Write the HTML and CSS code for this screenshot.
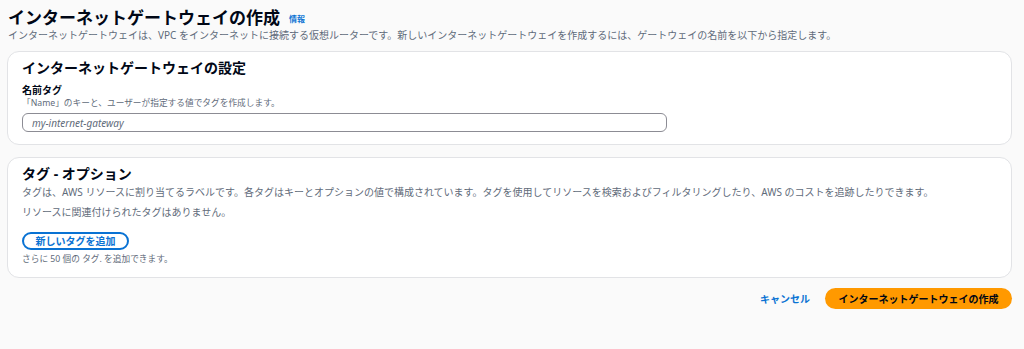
FILE: index.html
```html
<!DOCTYPE html>
<html lang="ja">
<head>
<meta charset="utf-8">
<title>インターネットゲートウェイの作成</title>
<link rel="stylesheet" href="styles.css">
</head>
<body>
<main class="page">
  <header class="page-header">
    <h1 class="title">インターネットゲートウェイの作成 <a class="info" href="#">情報</a></h1>
    <p class="subtitle">インターネットゲートウェイは、VPC をインターネットに接続する仮想ルーターです。新しいインターネットゲートウェイを作成するには、ゲートウェイの名前を以下から指定します。</p>
  </header>

  <section class="card">
    <h2 class="card-title">インターネットゲートウェイの設定</h2>
    <div class="field">
      <label class="label" for="name">名前タグ</label>
      <div class="hint">「Name」のキーと、ユーザーが指定する値でタグを作成します。</div>
      <input class="input" id="name" type="text" placeholder="my-internet-gateway">
    </div>
  </section>

  <section class="card card-tags">
    <h2 class="card-title">タグ - オプション</h2>
    <p class="desc">タグは、AWS リソースに割り当てるラベルです。各タグはキーとオプションの値で構成されています。タグを使用してリソースを検索およびフィルタリングしたり、AWS のコストを追跡したりできます。</p>
    <p class="empty">リソースに関連付けられたタグはありません。</p>
    <button class="btn-outline" type="button">新しいタグを追加</button>
    <p class="small">さらに 50 個の タグ. を追加できます。</p>
  </section>

  <footer class="actions">
    <button class="btn-link" type="button">キャンセル</button>
    <button class="btn-primary" type="button">インターネットゲートウェイの作成</button>
  </footer>
</main>
</body>
</html>
```

FILE: styles.css
```css
* { box-sizing: border-box; }
html, body { margin: 0; padding: 0; }
body {
  background: #fafafa;
  font-family: "Noto Sans", "Noto Sans CJK JP", sans-serif;
  color: #000716;
  width: 1024px;
  height: 349px;
  overflow: hidden;
}
.page {
  padding: 8px 12px 0 7px;
  display: flex;
  flex-direction: column;
}
.page-header { display: flex; flex-direction: column; }
.title {
  margin: 0;
  font-size: 17px;
  line-height: 20px;
  font-weight: 700;
  display: flex;
  align-items: center;
  gap: 9px;
  padding-left: 1px;
}
.info {
  font-size: 8px;
  font-weight: 700;
  color: #0972d3;
  text-decoration: none;
  line-height: 10px;
  margin-top: 1px;
}
.subtitle {
  margin: 0;
  font-size: 10px;
  line-height: 14px;
  color: #5f6b7a;
  padding-left: 1px;
}
.card {
  margin-top: 9px;
  background: #fff;
  border: 1px solid #e2e3e6;
  border-radius: 12px;
  padding: 6px 14px 12px 14px;
  display: flex;
  flex-direction: column;
}
.card-tags { margin-top: 12px; padding-top: 6px; }
.card-title {
  margin: 0;
  font-size: 14px;
  line-height: 20px;
  font-weight: 700;
}
.field {
  margin-top: 6px;
  display: flex;
  flex-direction: column;
}
.label {
  font-size: 10px;
  line-height: 13px;
  font-weight: 700;
}
.hint {
  font-size: 8.7px;
  line-height: 12px;
  color: #5f6b7a;
}
.input {
  margin-top: 4px;
  width: 645px;
  height: 19px;
  border: 1px solid #8c8c94;
  border-radius: 6px;
  padding: 0 9px;
  font-family: inherit;
  font-size: 10px;
  background: #fff;
  outline: none;
}
.input::placeholder {
  color: #5f6b7a;
  font-style: italic;
}
.desc, .empty, .small {
  margin: 0;
  color: #5f6b7a;
}
.desc {
  font-size: 10px;
  line-height: 14px;
  margin-top: 1px;
}
.empty {
  font-size: 10px;
  line-height: 14px;
  margin-top: 6px;
}
.btn-outline {
  align-self: flex-start;
  margin-top: 13px;
  height: 18px;
  width: 107px;
  border: 2px solid #0972d3;
  border-radius: 10px;
  background: #fff;
  color: #0972d3;
  font-family: inherit;
  font-size: 10px;
  font-weight: 700;
  line-height: 14px;
  padding: 0;
}
.small {
  font-size: 8.7px;
  line-height: 12px;
  margin-top: 3px;
}
.actions {
  margin-top: 10px;
  display: flex;
  justify-content: flex-end;
  align-items: center;
  gap: 15px;
}
.btn-link {
  border: 0;
  background: none;
  padding: 0;
  color: #0972d3;
  font-family: inherit;
  font-size: 10px;
  font-weight: 700;
  line-height: 14px;
}
.btn-primary {
  height: 21px;
  width: 187px;
  border: 0;
  border-radius: 11px;
  background: #ff9900;
  color: #000716;
  font-family: inherit;
  font-size: 10px;
  font-weight: 700;
  line-height: 14px;
  padding: 0;
}
```
